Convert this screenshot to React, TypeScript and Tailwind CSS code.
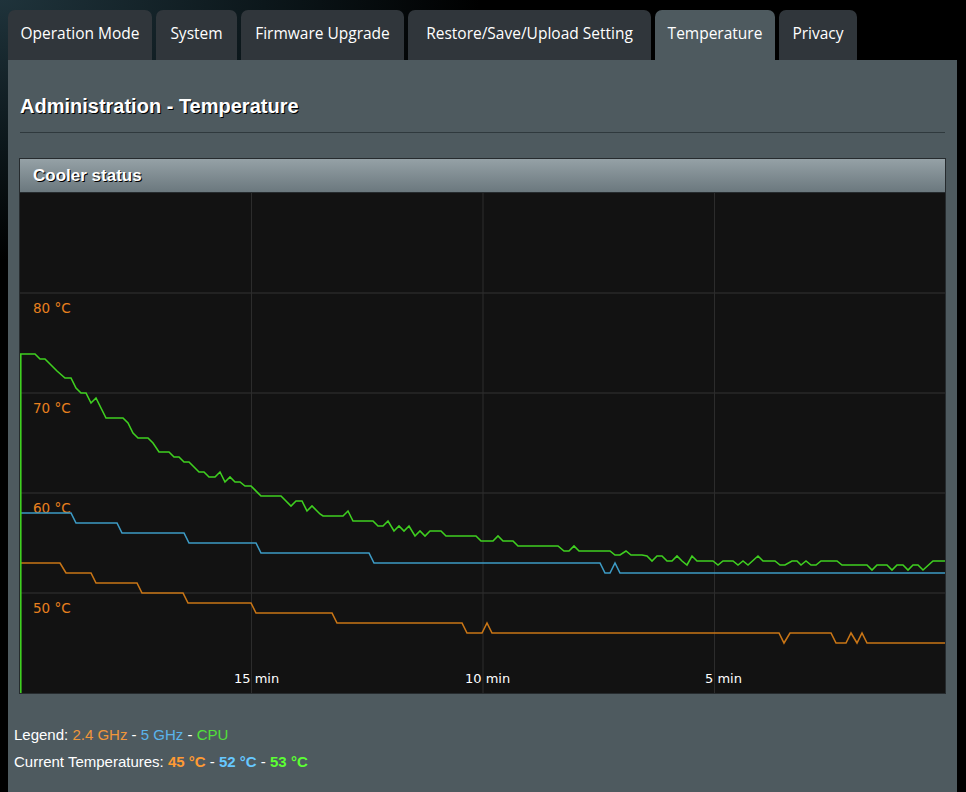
import React from 'react';

type Pt = [number, number];

const tabs = [
  { label: 'Operation Mode', w: 'w-[144px]' },
  { label: 'System', w: 'w-[81px]' },
  { label: 'Firmware Upgrade', w: 'w-[163px]' },
  { label: 'Restore/Save/Upload Setting', w: 'w-[243px]' },
  { label: 'Temperature', w: 'w-[120px]', active: true },
  { label: 'Privacy', w: 'w-[78px]' },
];

// traced in page coordinates, shifted to the chart origin below
const cpu: Pt[] = [
  [20, 354], [35, 354], [40, 359], [45, 359], [57, 371], [65, 378], [71, 378], [76, 388], [81, 393], [86, 393],
  [91, 403], [96, 398], [106, 418], [123, 418], [128, 423], [133, 433], [138, 438], [148, 438], [153, 443],
  [159, 452], [169, 452], [174, 457], [179, 457], [184, 462], [189, 462], [199, 472], [204, 472], [209, 477],
  [215, 477], [220, 472], [225, 482], [230, 477], [235, 482], [240, 482], [245, 486], [251, 486], [261, 496],
  [281, 496], [291, 506], [296, 501], [302, 501], [307, 511], [312, 506], [320, 514], [323, 516], [343, 516],
  [348, 511], [353, 521], [373, 521], [378, 526], [383, 526], [388, 521], [394, 531], [399, 526], [404, 531],
  [409, 526], [415, 536], [420, 531], [425, 536], [430, 531], [441, 531], [446, 536], [476, 536], [481, 541],
  [493, 541], [498, 536], [503, 541], [513, 541], [518, 546], [558, 546], [564, 551], [569, 551], [574, 546],
  [579, 551], [610, 551], [615, 555], [620, 555], [626, 551], [631, 555], [642, 555], [647, 556], [652, 561],
  [657, 556], [662, 556], [667, 561], [672, 561], [677, 556], [682, 561], [687, 565], [692, 556], [697, 561],
  [713, 561], [718, 565], [723, 561], [733, 561], [738, 565], [743, 561], [748, 565], [758, 556], [763, 561],
  [775, 561], [780, 565], [785, 565], [792, 561], [797, 561], [801, 565], [806, 561], [811, 565], [816, 565],
  [821, 561], [837, 561], [842, 565], [867, 565], [872, 570], [877, 565], [887, 565], [892, 570], [897, 565],
  [903, 565], [908, 570], [913, 565], [918, 565], [923, 570], [933, 561], [945, 561],
];

const ghz5: Pt[] = [
  [20, 513], [71, 513], [76, 523], [117, 523], [122, 533], [184, 533], [189, 543], [256, 543], [261, 553],
  [369, 553], [374, 563], [600, 563], [605, 573], [610, 573], [615, 563], [620, 573], [945, 573],
];

const ghz24: Pt[] = [
  [20, 563], [60, 563], [66, 573], [91, 573], [96, 583], [137, 583], [142, 593], [183, 593], [188, 603],
  [251, 603], [256, 613], [332, 613], [337, 623], [462, 623], [467, 633], [482, 633], [487, 623], [492, 633],
  [779, 633], [784, 643], [790, 633], [831, 633], [836, 643], [846, 643], [851, 633], [857, 643], [862, 633],
  [867, 643], [945, 643],
];

const toPoints = (pts: Pt[]) => pts.map(([x, y]) => `${x - 20},${y - 193}`).join(' ');

const yLabels = [
  { t: '80 °C', y: 120 },
  { t: '70 °C', y: 220 },
  { t: '60 °C', y: 320 },
  { t: '50 °C', y: 420 },
];

const xLabels = [
  { t: '15 min', x: 214 },
  { t: '10 min', x: 445 },
  { t: '5 min', x: 685 },
];

function CoolerChart() {
  return (
    <svg width="925" height="500" viewBox="0 0 925 500" className="block">
      <rect width="925" height="500" fill="#121212" />
      {[100, 200, 300, 400].map((y) => (
        <line key={y} x1="0" x2="925" y1={y} y2={y} stroke="#292929" strokeWidth="1.5" />
      ))}
      {[231.5, 463, 694.5].map((x) => (
        <line key={x} x1={x} x2={x} y1="0" y2="500" stroke="#2c2c2c" strokeWidth="1" />
      ))}
      {yLabels.map((l) => (
        <text key={l.t} x="13" y={l.y} fill="#e8801e" fontSize="13.5" fontFamily="'DejaVu Sans', sans-serif">
          {l.t}
        </text>
      ))}
      {xLabels.map((l) => (
        <text key={l.t} x={l.x} y="490" fill="#ffffff" fontSize="13" fontFamily="'DejaVu Sans', sans-serif">
          {l.t}
        </text>
      ))}
      <polyline points={toPoints(ghz24)} fill="none" stroke="#c87516" strokeWidth="1.6" />
      <polyline points={toPoints(ghz5)} fill="none" stroke="#3d9ac4" strokeWidth="1.6" />
      <line x1="0.8" x2="0.8" y1="500" y2="161" stroke="#3fcf20" strokeWidth="1.6" />
      <polyline points={toPoints(cpu)} fill="none" stroke="#3fcf20" strokeWidth="1.6" />
    </svg>
  );
}

export default function App() {
  return (
    <div className="min-h-[792px] bg-[radial-gradient(ellipse_480px_260px_at_0px_0px,#1f333b_0%,#0c171b_55%,#000000_100%)] font-['Liberation_Sans',Arial,sans-serif] text-white">
      <div className="flex gap-[4px] pl-[8px] pt-[10px]">
        {tabs.map((t) => (
          <div
            key={t.label}
            className={`${t.w} flex h-[50px] items-center justify-center rounded-t-[7px] pb-[3px] font-['Open_Sans',sans-serif] text-[15.5px] ${
              t.active ? 'bg-[#4e5a5f]' : 'bg-[#30363b]'
            }`}
          >
            {t.label}
          </div>
        ))}
      </div>

      <div className="ml-[8px] w-[949px] min-h-[732px] bg-[#4e5a5f]">
        <div className="mx-[12px] flex h-[73px] items-center border-b border-[#2f393d] pt-[19px]">
          <h1 className="text-[20px] font-bold leading-none [text-shadow:1px_1px_0_#000]">
            Administration - Temperature
          </h1>
        </div>

        <div className="ml-[11px] mt-[25px] w-[927px] border border-[#262b2e]">
          <div className="flex h-[33px] items-center bg-[linear-gradient(to_bottom,#95a1a6,#6b787e)] pl-[13px] text-[17px] font-bold [text-shadow:1px_1px_0_#000]">
            Cooler status
          </div>
          <div className="border-t border-[#262b2e]">
            <CoolerChart />
          </div>
        </div>

        <div className="pl-[6px] pt-[27px] text-[15px] leading-[27px]">
          <div>
            Legend: <span className="text-[#f0963a]">2.4 GHz</span> - <span className="text-[#5ab4ec]">5 GHz</span> -{' '}
            <span className="text-[#52e03a]">CPU</span>
          </div>
          <div>
            Current Temperatures: <span className="font-bold text-[#ff9a33]">45 °C</span> -{' '}
            <span className="font-bold text-[#66c8ff]">52 °C</span> -{' '}
            <span className="font-bold text-[#5cff33]">53 °C</span>
          </div>
        </div>
      </div>
    </div>
  );
}
